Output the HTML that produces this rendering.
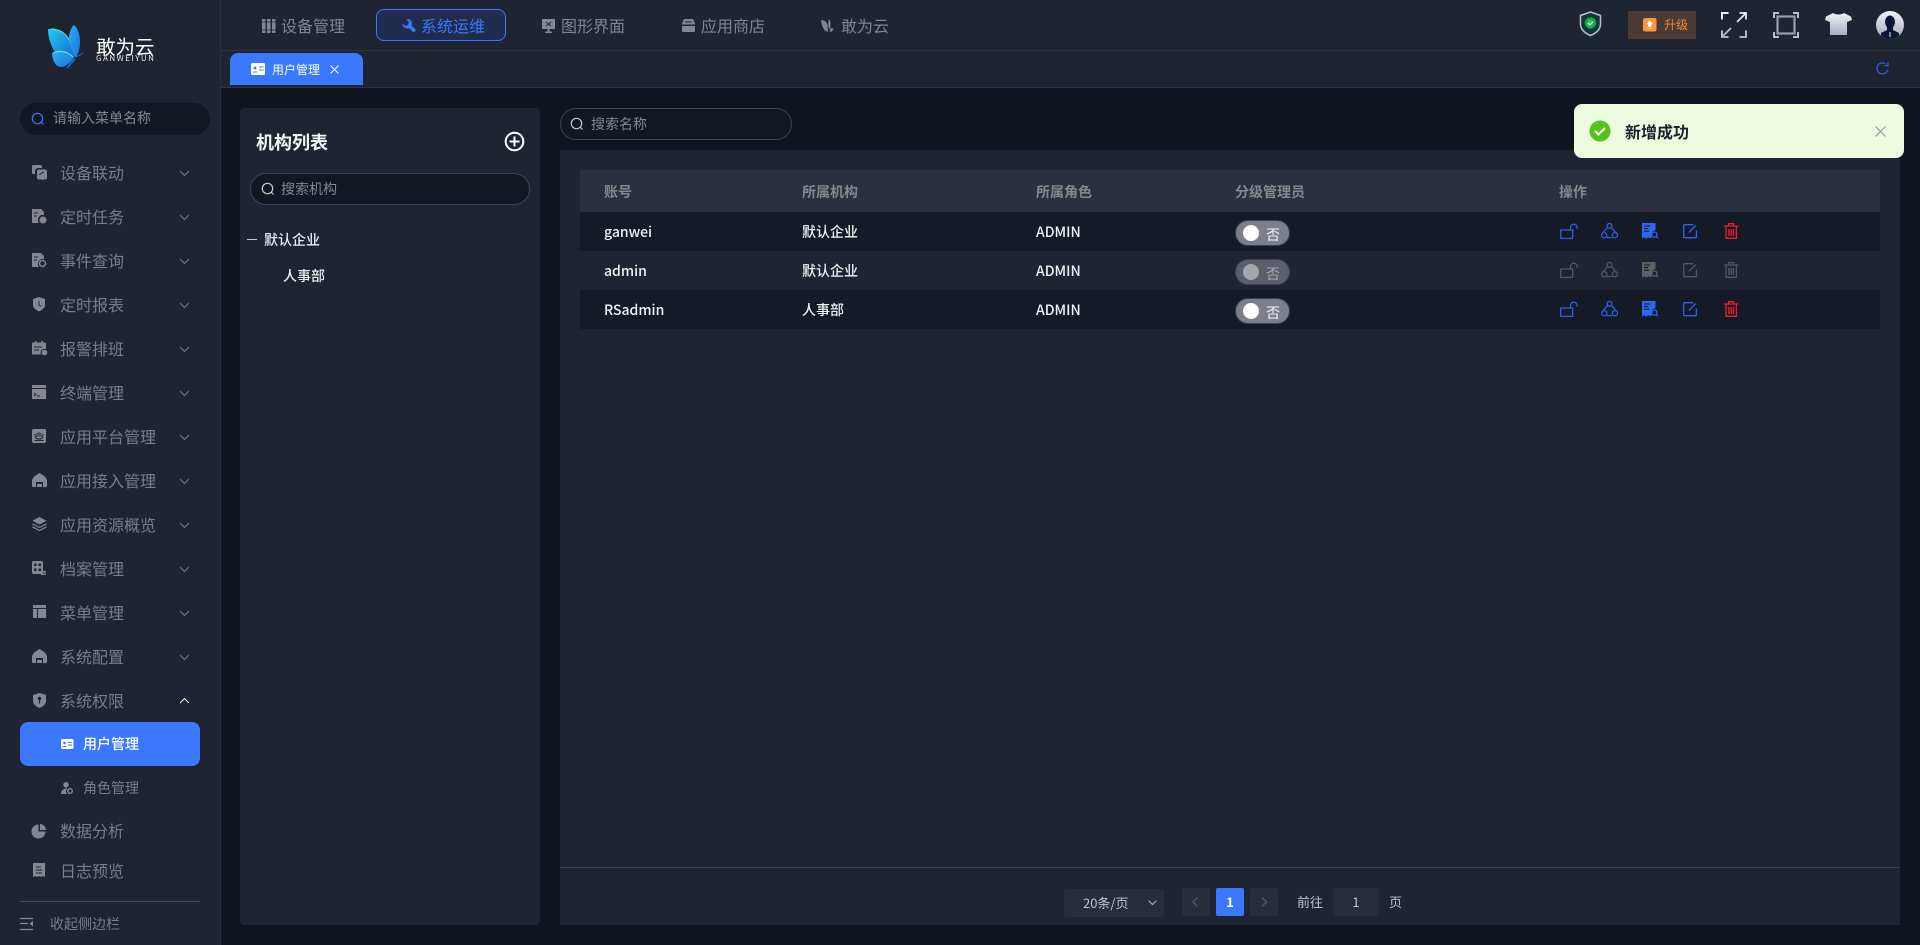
<!DOCTYPE html>
<html lang="zh-CN">
<head>
<meta charset="utf-8">
<title>用户管理</title>
<style>
html,body{margin:0;padding:0;width:1920px;height:945px;overflow:hidden;background:#10141f}
body{position:relative;font-family:"Noto Sans CJK SC","Liberation Sans",sans-serif;color:#fff}
.a{position:absolute}
.t{position:absolute;white-space:nowrap;line-height:24px;height:24px}
svg{position:absolute;display:block;overflow:visible}
.m{left:60px;font-size:16px;color:#797d87}
.n{font-size:16px;color:#81858e;top:13px}
.h{font-size:14px;color:#84888f;font-weight:700;top:180px}
.c{font-size:14px;color:#f2f3f5;font-weight:500}
.ch{fill:none;stroke:#777b85;stroke-width:1}
.sw{position:absolute;left:1235px;width:55px;height:26px;border-radius:13px;background:#7c7f8a;border:1px solid #3b4256;box-sizing:border-box}
.sw i{position:absolute;left:7px;top:4px;width:16px;height:16px;border-radius:50%;background:#fff}
.sw b{position:absolute;left:30px;top:2px;font-size:14px;line-height:24px;font-weight:400;color:#f4f4f5}
.row{position:absolute;left:580px;width:1300px;height:39px}
.i{fill:#84878f}
</style>
</head>
<body>
<svg width="0" height="0" style="position:absolute">
<defs>
<g id="lock" fill="none" stroke="currentColor" stroke-width="1.3"><rect x=".7" y="6" width="12" height="8.4"/><path d="M10.5 6V3.5a3.3 3.3 0 0 1 6.6 0V5"/></g>
<g id="tri" fill="none" stroke="currentColor" stroke-width="1.3"><circle cx="8.5" cy="2.8" r="2.4"/><circle cx="3.3" cy="12.2" r="2.6"/><circle cx="13.9" cy="12.2" r="2.6"/><path d="M6.6 4.6 1.9 9.8M10.4 4.6l4.8 5.200M5.900 14.600h5.400"/></g>
<g id="doc"><path d="M0 0h13.500v7.200a4.400 4.400 0 0 0-3.600 6.600l-1.300 1.600-2-1.200-2.300 1.600-2.200-1.600L0 16z" fill="currentColor"/><path d="M2.200 3h6M2.200 5.600h4M2.200 8.200h5" stroke="#141a26" stroke-width="1.100"/><circle cx="12.400" cy="11.600" r="2.600" fill="none" stroke="currentColor" stroke-width="1.300"/><path d="m14.200 13.400 1.800 1.800" stroke="currentColor" stroke-width="1.300"/></g>
<g id="edit" fill="none" stroke="currentColor" stroke-width="1.300"><path d="M13.400 6.500v6.200a1 1 0 0 1-1 1H1.700a1 1 0 0 1-1-1V1.700a1 1 0 0 1 1-1h8.700"/><path d="M5.800 8.500 12.800 1.500"/></g>
<g id="trash" fill="none" stroke="currentColor" stroke-width="1.300"><path d="M0 3h14.400M4.700 3V.7h5V3M2 3v12.300h10.400V3"/><path d="M4.900 6v7M7.200 6v7M9.500 6v7" stroke-width="1.400"/></g>
<path id="chev" d="M0 0l4.500 4.500L9 0" class="ch"/>
</defs>
</svg>

<!-- sidebar -->
<div class="a" style="left:0;top:0;width:220px;height:945px;background:#1f2432;border-right:1px solid #2b3040"></div>

<!-- logo -->
<svg style="left:46px;top:24px" width="42" height="46" viewBox="0 0 42 46">
<defs>
<linearGradient id="lg1" x1="0" y1="0" x2="1" y2="1"><stop offset="0" stop-color="#2bb6ee"/><stop offset="1" stop-color="#1c6fe0"/></linearGradient>
<linearGradient id="lg2" x1="0" y1="0" x2="1" y2="1"><stop offset="0" stop-color="#22d0e8"/><stop offset="1" stop-color="#1466dd"/></linearGradient>
</defs>
<path d="M28 1c-4 3-6 12-5 22l6 11c3-3 5-9 5-16 0-8-3-15-6-17z" fill="url(#lg1)"/>
<path d="M2 5c8-1 18 3 21 12 2 5 4 12 5 17-5-1-12-3-18-5C6 25 2 14 2 5z" fill="url(#lg2)"/>
<path d="M5 5c8 0 15 4 18 11" fill="none" stroke="#63e6cf" stroke-width="1"/>
<path d="M6 29c8-4 16-2 22 5-3 4-8 9-13 9-6 0-9-8-9-14z" fill="url(#lg1)"/>
<path d="M7 29c7-3 14-2 20 4" fill="none" stroke="#6fe8d5" stroke-width="1"/>
<path d="M29 35 21 44" stroke="#1c62d0" stroke-width="2"/>
<path d="M30 33l5-2.500 2-2" stroke="#1c62d0" stroke-width="1" fill="none"/>
</svg>
<div class="t" style="left:96px;top:33px;font-size:19.500px;color:#fff;line-height:26px;height:26px">敢为云</div>
<div class="t" style="left:96px;top:49px;font-size:8px;color:#e8eaee;letter-spacing:1.500px;line-height:20px;height:20px">GANWEIYUN</div>

<!-- menu search -->
<div class="a" style="left:20px;top:103px;width:190px;height:32px;border-radius:16px;background:#131722"></div>
<svg style="left:31px;top:112px" width="14" height="14"><circle cx="6.500" cy="6.500" r="5.200" fill="none" stroke="#3a74ff" stroke-width="1.200"/><path d="m10.500 10.500 2 2" stroke="#3a74ff" stroke-width="1.200"/></svg>
<div class="t" style="left:53px;top:106px;font-size:14px;color:#82868f">请输入菜单名称</div>

<!-- menu items -->
<div class="t m" style="top:160px">设备联动</div>
<div class="t m" style="top:204px">定时任务</div>
<div class="t m" style="top:248px">事件查询</div>
<div class="t m" style="top:292px">定时报表</div>
<div class="t m" style="top:336px">报警排班</div>
<div class="t m" style="top:380px">终端管理</div>
<div class="t m" style="top:424px">应用平台管理</div>
<div class="t m" style="top:468px">应用接入管理</div>
<div class="t m" style="top:512px">应用资源概览</div>
<div class="t m" style="top:556px">档案管理</div>
<div class="t m" style="top:600px">菜单管理</div>
<div class="t m" style="top:644px">系统配置</div>
<div class="t m" style="top:688px">系统权限</div>
<div class="t m" style="top:818px">数据分析</div>
<div class="t m" style="top:858px">日志预览</div>

<svg style="left:180px;top:171px" width="10" height="6"><use href="#chev"/></svg>
<svg style="left:180px;top:215px" width="10" height="6"><use href="#chev"/></svg>
<svg style="left:180px;top:259px" width="10" height="6"><use href="#chev"/></svg>
<svg style="left:180px;top:303px" width="10" height="6"><use href="#chev"/></svg>
<svg style="left:180px;top:347px" width="10" height="6"><use href="#chev"/></svg>
<svg style="left:180px;top:391px" width="10" height="6"><use href="#chev"/></svg>
<svg style="left:180px;top:435px" width="10" height="6"><use href="#chev"/></svg>
<svg style="left:180px;top:479px" width="10" height="6"><use href="#chev"/></svg>
<svg style="left:180px;top:523px" width="10" height="6"><use href="#chev"/></svg>
<svg style="left:180px;top:567px" width="10" height="6"><use href="#chev"/></svg>
<svg style="left:180px;top:611px" width="10" height="6"><use href="#chev"/></svg>
<svg style="left:180px;top:655px" width="10" height="6"><use href="#chev"/></svg>
<svg style="left:180px;top:698px" width="10" height="6"><path d="M0 5l4.500-4.500L9 5" fill="none" stroke="#f2f3f5"/></svg>

<!-- menu icons -->
<svg style="left:32px;top:165px" width="15" height="15" class="i"><path d="M1.500 0h6.500a2 2 0 0 1 2 2v1H6a3 3 0 0 0-3 3v3H1.500A1.500 1.500 0 0 1 0 7.500V1.500A1.500 1.500 0 0 1 1.500 0z"/><path d="M7 4.500h6a2 2 0 0 1 2 2v6a2 2 0 0 1-2 2H7a2 2 0 0 1-2-2v-6a2 2 0 0 1 2-2z"/><path d="M7.500 10c1-2 3-2 4.500-3" stroke="#1f2432" fill="none"/></svg>
<svg style="left:32px;top:209px" width="15" height="15" class="i"><path d="M0 0h9l3 3v3a5 5 0 0 0-5 8H0z"/><circle cx="11" cy="11" r="3.500"/><path d="M2 4h4M2 7h3" stroke="#1f2432"/></svg>
<svg style="left:32px;top:253px" width="15" height="15" class="i"><path d="M0 0h9l3 3v3a5 5 0 0 0-5 8H0z"/><circle cx="10.500" cy="10.500" r="3" fill="none" stroke="#84878f" stroke-width="1.500"/><path d="M2 4h4M2 7h3" stroke="#1f2432"/></svg>
<svg style="left:32px;top:297px" width="15" height="15" class="i"><path d="M7 0 13 2v6c0 3-3 5-6 6.500C4 13 1 11 1 8V2z"/><path d="M7 4v4l2 1" stroke="#1f2432" fill="none"/></svg>
<svg style="left:32px;top:341px" width="16" height="15" class="i"><path d="M3 0h1.500v1.500h5V0H11v1.500h2a1 1 0 0 1 1 1V8a4 4 0 0 0-5 5.500H1a1 1 0 0 1-1-1v-10a1 1 0 0 1 1-1h2z"/><circle cx="12.500" cy="11.500" r="2.800"/><path d="M2 6h8M2 9h5" stroke="#1f2432"/></svg>
<svg style="left:32px;top:385px" width="15" height="14" class="i"><path d="M0 0h14v3H0z"/><path d="M0 4h14v10H0z"/><path d="m2 8 2 1.500L2 11M5 11h3" stroke="#1f2432" fill="none"/></svg>
<svg style="left:32px;top:429px" width="14" height="14" class="i"><rect width="14" height="14" rx="2"/><path d="M3 5c0 4 1 5 4 5s4-1 4-5M5 4v4M7 3v5M9 4v4M2.500 11.500h9" stroke="#1f2432" fill="none"/></svg>
<svg style="left:32px;top:473px" width="15" height="14" class="i"><path d="M7.500 0 13 3.500 15 7v6a1 1 0 0 1-1 1h-3V9H4v5H1a1 1 0 0 1-1-1V7l2-3.500z"/><path d="M5 11h5v3H5z"/></svg>
<svg style="left:32px;top:517px" width="15" height="14" class="i"><path d="M7.500 0 14.500 3.800 7.500 7.600.5 3.800z"/><path d="m.5 6.800 7 3.800 7-3.800M.5 9.800l7 3.800 7-3.800" fill="none" stroke="#84878f" stroke-width="1.200"/></svg>
<svg style="left:32px;top:561px" width="14" height="14" class="i"><rect width="11" height="13" rx="1.500"/><path d="M2 2.500h2.500V5H2zM6.500 2.500H9V5H6.500zM2 7.500h2.500V10H2zM6.500 7.500H9V10H6.500z" fill="#1f2432"/><path d="M9 10h5v1.500H9zM9 12.500h5V14H9z"/></svg>
<svg style="left:33px;top:605px" width="13" height="13" class="i"><path d="M0 0h13v3H0zM0 4h4v9H0zM5 4h8v9H5z"/></svg>
<svg style="left:32px;top:649px" width="15" height="14" class="i"><path d="M7.500 0 13 3.500 15 7v6a1 1 0 0 1-1 1h-3V9H4v5H1a1 1 0 0 1-1-1V7l2-3.500z"/><path d="M5 11h5v3H5z"/></svg>
<svg style="left:33px;top:693px" width="13" height="15" class="i"><path d="M6.500 0 13 2v6c0 3-3 5.500-6.500 7C3 13.500 0 11 0 8V2z"/><circle cx="6.500" cy="5.500" r="1.700" fill="#1f2432"/><path d="M6.500 7v3.500" stroke="#1f2432" stroke-width="1.300"/></svg>
<svg style="left:32px;top:824px" width="14" height="14" class="i"><path d="M6.500.500V7.500H13.500A7 7 0 1 1 6.500.500z"/><path d="M8 0a6.500 6.500 0 0 1 6 6H8z"/></svg>
<svg style="left:33px;top:863px" width="13" height="15" class="i"><path d="M0 0h12v14l-2-1-2 1-2-1-2 1-2-1-2 1z"/><path d="M3 4h5M3 7h6M3 10h6" stroke="#1f2432"/></svg>

<!-- active submenu -->
<div class="a" style="left:20px;top:722px;width:180px;height:44px;border-radius:8px;background:#3a78ff"></div>
<svg style="left:61px;top:739px" width="12" height="10"><rect width="12.500" height="10" rx="1.500" fill="#fff"/><circle cx="3.500" cy="4" r="1.300" fill="#3a78ff"/><path d="M1.500 7.500h4M7 3.500h4M7 6h4" stroke="#3a78ff"/></svg>
<div class="t" style="left:83px;top:732px;font-size:14px;color:#fff;font-weight:500">用户管理</div>
<svg style="left:61px;top:782px" width="12" height="12" class="i"><circle cx="5" cy="2.800" r="2.800"/><path d="M0 12c0-3 2-5.500 5-5.500 .5 0 1 0 1.300 .2A3.500 3.500 0 0 0 6 12z"/><circle cx="9" cy="9" r="2.300" fill="none" stroke="#84878f" stroke-width="1.500"/></svg>
<div class="t" style="left:83px;top:776px;font-size:14px;color:#797d87">角色管理</div>

<div class="a" style="left:20px;top:901px;width:180px;height:1px;background:#484c59"></div>
<svg style="left:20px;top:918px" width="14" height="12"><path d="M0 .5h13M0 5.500h8M0 11.500h13" stroke="#868a93" stroke-width="1.200"/><path d="M13 3v5.500L9.500 5.800z" fill="#868a93"/></svg>
<div class="t" style="left:50px;top:912px;font-size:14px;color:#797d87">收起侧边栏</div>

<!-- topbar -->
<div class="a" style="left:221px;top:0;width:1699px;height:87px;background:#1f2432"></div>
<div class="a" style="left:221px;top:50px;width:1699px;height:1px;background:#2e3342"></div>
<div class="a" style="left:221px;top:87px;width:1699px;height:1px;background:#2e3342"></div>

<div class="a" style="left:376px;top:9px;width:130px;height:32px;box-sizing:border-box;border:1px solid #3a78ff;border-radius:8px;background:#202c4d"></div>
<svg style="left:262px;top:19px" width="14" height="14" class="i"><path d="M0 0h3.500v14H0zM5 0h3.500v14H5zM10 0h3.500v14H10z"/><path d="M0 3h13.500M0 11h13.500" stroke="#1f2432" stroke-width=".8"/></svg>
<div class="t n" style="left:281px">设备管理</div>
<svg style="left:402px;top:19px" width="14" height="14"><path d="M5.500 0a4.500 4.500 0 0 1 4 6.500l4.500 4.500-2.500 2.500L7 9a4.500 4.500 0 0 1-6.500-4.500L3 7l3-1 1-3-2.500-2.500z" fill="#3a78ff"/></svg>
<div class="t n" style="left:421px;color:#3a78ff">系统运维</div>
<svg style="left:542px;top:19px" width="14" height="14" class="i"><rect width="13" height="10"/><path d="M5.500 10h2v2.500H10V14H3v-1.500h2.500z"/><path d="M4 3l5 4M9 3 4 7" stroke="#1f2432"/></svg>
<div class="t n" style="left:561px">图形界面</div>
<svg style="left:682px;top:19px" width="13" height="13" class="i"><path d="M2 0h9l2 4.500v1H0v-1z"/><path d="M0 7h13v5a1 1 0 0 1-1 1H1a1 1 0 0 1-1-1z"/><path d="M3 3h7" stroke="#1f2432"/></svg>
<div class="t n" style="left:701px">应用商店</div>
<svg style="left:821px;top:19px" width="15" height="14" class="i"><path d="M0 1c3 0 6 2 6.500 5L7 13C3 12 1 8 0 1zM8 0c1.500 2 2 5 1 9l-1 1c-1-3-1-7 0-10zM9.500 9l3 .5-1.500 3-2.500.5z"/></svg>
<div class="t n" style="left:841px">敢为云</div>

<!-- right top -->
<svg style="left:1579px;top:11px" width="23" height="26">
<defs><radialGradient id="gn"><stop offset="0" stop-color="#12e04b"/><stop offset="1" stop-color="#0a9e36"/></radialGradient></defs>
<path d="M11.500 1 21.500 4.500V13c0 5-4 9-10 11.500C5.500 22 1.500 18 1.500 13V4.500z" fill="#16323a" stroke="#b2bcc7" stroke-width="1.600"/>
<circle cx="11.500" cy="12" r="5.800" fill="url(#gn)"/>
<path d="m8.800 12 2 2 3.200-3.200" fill="none" stroke="#fff" stroke-width="1.300"/>
</svg>
<div class="a" style="left:1628px;top:11px;width:68px;height:28px;background:#4a3b34"></div>
<svg style="left:1643px;top:18px" width="14" height="14"><rect width="13.500" height="13.500" rx="2" fill="#f9953f"/><path d="M6.800 3 9.500 6H8v2.500H5.500V6H4zM4.200 10.200h5.100" fill="#fff" stroke="#fff" stroke-width=".6"/></svg>
<div class="t" style="left:1664px;top:13px;font-size:12px;color:#f5862f">升级</div>
<svg style="left:1721px;top:12px" width="26" height="26">
<defs><linearGradient id="gy" gradientUnits="userSpaceOnUse" x1="0" y1="0" x2="0" y2="26"><stop offset="0" stop-color="#f2f4f7"/><stop offset="1" stop-color="#a3adc5"/></linearGradient></defs>
<path d="M1 7.500V1h6.500M7.500 25H1v-6.500M25 18.500V25h-6.500" fill="none" stroke="url(#gy)" stroke-width="2"/>
<path d="M16 10 24 2M18.500 1H25v6.500M10 16 2 24M1 18.500V25h6.500" fill="none" stroke="url(#gy)" stroke-width="1.800"/>
</svg>
<svg style="left:1773px;top:12px" width="26" height="26" fill="none">
<path d="M1 6V1h5M20 1h5v5M25 20v5h-5M6 25H1v-5" stroke="#b6bdcc" stroke-width="2"/>
<rect x="4.500" y="4.500" width="17" height="17" stroke="#979eb0" stroke-width="2.200"/>
</svg>
<svg style="left:1825px;top:12px" width="27" height="24">
<defs><linearGradient id="gy2" x1="0" y1="0" x2="0" y2="1"><stop offset="0" stop-color="#f0f2f5"/><stop offset="1" stop-color="#a5afc7"/></linearGradient></defs>
<path d="M8 1c3 2 8 2 11 0l7 3.500 1 3.500-5 2v13H5V10L0 8l1-3.500z" fill="url(#gy2)"/>
</svg>
<svg style="left:1876px;top:11px" width="28" height="28">
<defs><linearGradient id="gy3" x1="0" y1="0" x2="0" y2="1"><stop offset="0" stop-color="#f2f3f6"/><stop offset="1" stop-color="#9fa8c0"/></linearGradient><clipPath id="cp"><circle cx="14" cy="14" r="14"/></clipPath></defs>
<circle cx="14" cy="14" r="14" fill="url(#gy3)"/>
<g clip-path="url(#cp)"><ellipse cx="14" cy="11" rx="5" ry="6.500" fill="#0d1733"/><path d="M11 15h6v4l6 3v6H5v-6l6-3z" fill="#0d1733"/><path d="M14 21v5" stroke="#c5cad6" stroke-width="1.200"/></g>
</svg>

<!-- tab -->
<div class="a" style="left:230px;top:53px;width:133px;height:32px;background:#3a78ff;border-radius:8px 8px 0 0"></div>
<svg style="left:251px;top:63px" width="14" height="12"><rect width="14" height="12" rx="1.500" fill="#fff"/><circle cx="4" cy="5" r="1.500" fill="#3a78ff"/><path d="M1.800 9h4.500M8 4h4.500M8 7h4.500" stroke="#3a78ff"/></svg>
<div class="t" style="left:272px;top:58px;font-size:12px;color:#fff">用户管理</div>
<svg style="left:330px;top:65px" width="9" height="9"><path d="m.5.500 8 8M8.500.500l-8 8" stroke="#fff" stroke-width="1"/></svg>
<svg style="left:1876px;top:62px" width="13" height="13" fill="none"><path d="M11.800 7.500A5.500 5.500 0 1 1 9.500 1.800" stroke="#2f66dd" stroke-width="1.200"/><path d="M12 0v3.500H8.500" stroke="#2f66dd" stroke-width="1.200"/></svg>

<!-- left panel -->
<div class="a" style="left:240px;top:108px;width:300px;height:817px;background:#1f2432;border-radius:4px"></div>
<div class="t" style="left:256px;top:130px;font-size:18px;font-weight:700;color:#f4f5f7">机构列表</div>
<svg style="left:504px;top:131px" width="21" height="21" fill="none"><circle cx="10.500" cy="10.500" r="8.800" stroke="#fff" stroke-width="2"/><path d="M5.500 10.500h10M10.500 5.500v10" stroke="#fff" stroke-width="2"/></svg>
<div class="a" style="left:250px;top:173px;width:280px;height:32px;box-sizing:border-box;border:1px solid #3c4459;border-radius:16px;background:#131722"></div>
<svg style="left:261px;top:182px" width="14" height="14"><circle cx="6.500" cy="6.500" r="5.200" fill="none" stroke="#c9ccd2" stroke-width="1.200"/><path d="m10.500 10.500 2 2" stroke="#c9ccd2" stroke-width="1.200"/></svg>
<div class="t" style="left:281px;top:177px;font-size:14px;color:#82868f">搜索机构</div>
<div class="a" style="left:247px;top:239px;width:10px;height:1px;background:#c4c7cd"></div>
<div class="t" style="left:264px;top:228px;font-size:14px;font-weight:500;color:#eceef1">默认企业</div>
<div class="t" style="left:283px;top:264px;font-size:14px;font-weight:500;color:#eceef1">人事部</div>

<!-- right panel -->
<div class="a" style="left:560px;top:108px;width:232px;height:32px;box-sizing:border-box;border:1px solid #3c4459;border-radius:16px;background:#131722"></div>
<svg style="left:570px;top:117px" width="14" height="14"><circle cx="6.500" cy="6.500" r="5.200" fill="none" stroke="#c9ccd2" stroke-width="1.200"/><path d="m10.500 10.500 2 2" stroke="#c9ccd2" stroke-width="1.200"/></svg>
<div class="t" style="left:591px;top:112px;font-size:14px;color:#82868f">搜索名称</div>

<div class="a" style="left:560px;top:150px;width:1340px;height:775px;background:#1f2432"></div>
<div class="a" style="left:560px;top:867px;width:1340px;height:1px;background:#3a4054"></div>

<!-- table -->
<div class="a" style="left:580px;top:170px;width:1300px;height:42px;background:#2a3040"></div>
<div class="t h" style="left:604px">账号</div>
<div class="t h" style="left:802px">所属机构</div>
<div class="t h" style="left:1036px">所属角色</div>
<div class="t h" style="left:1235px">分级管理员</div>
<div class="t h" style="left:1559px">操作</div>

<div class="row" style="top:212px;background:#141a26"></div>
<div class="row" style="top:251px;background:#1e2431"></div>
<div class="row" style="top:290px;background:#141a26"></div>

<div class="t c" style="left:604px;top:220px">ganwei</div>
<div class="t c" style="left:802px;top:220px">默认企业</div>
<div class="t c" style="left:1036px;top:220px">ADMIN</div>
<div class="t c" style="left:604px;top:259px">admin</div>
<div class="t c" style="left:802px;top:259px">默认企业</div>
<div class="t c" style="left:1036px;top:259px">ADMIN</div>
<div class="t c" style="left:604px;top:298px">RSadmin</div>
<div class="t c" style="left:802px;top:298px">人事部</div>
<div class="t c" style="left:1036px;top:298px">ADMIN</div>

<div class="sw" style="top:220px"><i></i><b>否</b></div>
<div class="sw" style="top:259px;background:#5c5f6b"><i style="background:#a3a5ab"></i><b style="color:#a9abb1">否</b></div>
<div class="sw" style="top:298px"><i></i><b>否</b></div>

<!-- row 1 ops -->
<svg style="left:1560px;top:224px;color:#2a5ee8" width="18" height="16"><use href="#lock"/></svg>
<svg style="left:1601px;top:223px;color:#2a5ee8" width="18" height="16"><use href="#tri"/></svg>
<svg style="left:1642px;top:223px;color:#2f66f0" width="16" height="16"><use href="#doc"/></svg>
<svg style="left:1683px;top:224px;color:#2f66f0" width="14" height="14"><use href="#edit"/></svg>
<svg style="left:1724px;top:223px;color:#ee1c30" width="15" height="16"><use href="#trash"/></svg>
<!-- row 2 ops -->
<svg style="left:1560px;top:263px;color:#55575c" width="18" height="16"><use href="#lock"/></svg>
<svg style="left:1601px;top:262px;color:#55575c" width="18" height="16"><use href="#tri"/></svg>
<svg style="left:1642px;top:262px;color:#5f6064" width="16" height="16"><use href="#doc"/></svg>
<svg style="left:1683px;top:263px;color:#55575c" width="14" height="14"><use href="#edit"/></svg>
<svg style="left:1724px;top:262px;color:#55575c" width="15" height="16"><use href="#trash"/></svg>
<!-- row 3 ops -->
<svg style="left:1560px;top:302px;color:#2a5ee8" width="18" height="16"><use href="#lock"/></svg>
<svg style="left:1601px;top:301px;color:#2a5ee8" width="18" height="16"><use href="#tri"/></svg>
<svg style="left:1642px;top:301px;color:#2f66f0" width="16" height="16"><use href="#doc"/></svg>
<svg style="left:1683px;top:302px;color:#2f66f0" width="14" height="14"><use href="#edit"/></svg>
<svg style="left:1724px;top:301px;color:#ee1c30" width="15" height="16"><use href="#trash"/></svg>

<!-- pagination -->
<div class="a" style="left:1064px;top:889px;width:100px;height:28px;background:#282d3c;border-radius:3px"></div>
<div class="t" style="left:1083px;top:891px;font-size:13px;color:#bfc2c9">20条/页</div>
<svg style="left:1148px;top:900px" width="9" height="6"><path d="M.5.500 4.500 4.500 8.500.500" fill="none" stroke="#a4a7ae" stroke-width="1.200"/></svg>
<div class="a" style="left:1182px;top:888px;width:28px;height:28px;background:#282d3c;border-radius:2px"></div>
<svg style="left:1192px;top:897px" width="7" height="10"><path d="M5.500.500 1 5l4.500 4.500" fill="none" stroke="#53565f" stroke-width="1.300"/></svg>
<div class="a" style="left:1216px;top:888px;width:28px;height:28px;background:#3a78ff;border-radius:2px;font-size:13px;font-weight:700;line-height:28px;text-align:center;color:#fff">1</div>
<div class="a" style="left:1250px;top:888px;width:28px;height:28px;background:#282d3c;border-radius:2px"></div>
<svg style="left:1261px;top:897px" width="7" height="10"><path d="M1 .500 5.500 5 1 9.500" fill="none" stroke="#53565f" stroke-width="1.300"/></svg>
<div class="t" style="left:1297px;top:890px;font-size:13px;color:#bfc2c9">前往</div>
<div class="a" style="left:1333px;top:888px;width:46px;height:28px;background:#282d3c;border-radius:2px;font-size:13px;line-height:28px;text-align:center;color:#bfc2c9">1</div>
<div class="t" style="left:1389px;top:890px;font-size:13px;color:#bfc2c9">页</div>

<!-- toast -->
<div class="a" style="left:1574px;top:104px;width:330px;height:54px;background:#eefbe0;border-radius:8px"></div>
<svg style="left:1589px;top:120px" width="22" height="22"><circle cx="11" cy="11" r="10.500" fill="#52c41a"/><path d="m6 11 3.500 3.500L16 8" fill="none" stroke="#fff" stroke-width="2"/></svg>
<div class="t" style="left:1625px;top:119px;font-size:16px;font-weight:700;color:#1b1f29">新增成功</div>
<svg style="left:1875px;top:126px" width="11" height="11"><path d="m.5.500 10 10M10.500.500l-10 10" stroke="#8d9095" stroke-width="1"/></svg>
</body>
</html>
